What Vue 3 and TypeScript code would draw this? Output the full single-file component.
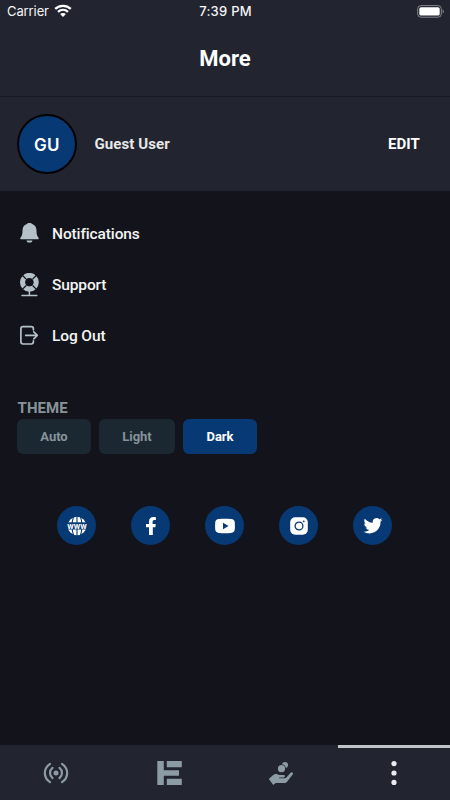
<script setup lang="ts">
import { ref } from 'vue'

type Theme = 'Auto' | 'Light' | 'Dark'

const menu = [
  { id: 'bell', label: 'Notifications' },
  { id: 'support', label: 'Support' },
  { id: 'logout', label: 'Log Out' },
]
const themes: Theme[] = ['Auto', 'Light', 'Dark']
const theme = ref<Theme>('Dark')
const socials = ['web', 'facebook', 'youtube', 'instagram', 'twitter']
const tabs = ['live', 'home', 'give', 'more']
const activeTab = ref('more')
</script>

<template>
  <div class="screen">
    <header class="top">
      <div class="status">
        <div class="carrier">
          <span>Carrier</span>
          <svg width="18" height="13" viewBox="0 0 18 13">
            <path d="M1.2 4.9C5.6.8 12.4.8 16.8 4.9" fill="none" stroke="#fff" stroke-width="2.3" />
            <path d="M4 7.9c2.9-2.6 7.1-2.6 10 0" fill="none" stroke="#fff" stroke-width="2.2" />
            <path d="M6.1 10.1c1.6-1.5 4.2-1.5 5.8 0L9 13z" fill="#fff" />
          </svg>
        </div>
        <span class="time">7:39 PM</span>
        <svg class="battery" width="28" height="13" viewBox="0 0 28 13">
          <rect x=".7" y=".6" width="23.6" height="11.6" rx="3.2" fill="none" stroke="#85868c" />
          <rect x="2.3" y="2.2" width="20.4" height="8.4" rx="1.7" fill="#fff" />
          <path d="M25.6 4.3c1.7.8 1.7 3.5 0 4.3z" fill="#85868c" />
        </svg>
      </div>
      <h1>More</h1>
    </header>

    <section class="profile">
      <div class="avatar">GU</div>
      <span class="name">Guest User</span>
      <button class="edit">EDIT</button>
    </section>

    <main>
      <nav class="menu">
        <a v-for="item in menu" :key="item.id" class="row">
          <svg width="24" height="24" viewBox="0 0 24 24" fill="#b5c1c8">
            <template v-if="item.id === 'bell'">
              <path d="M12.500 1c1.500 0 2.400.5 2.700 1.100 2.700.9 4.300 3.200 4.300 6.500 0 3.900.6 5.500 1.700 6.600.5.500.6.900.6 1.300 0 .5-.3.700-.8.700H4c-.5 0-.8-.2-.8-.7 0-.4.1-.8.600-1.300 1.100-1.100 1.700-2.700 1.700-6.600 0-3.300 1.600-5.600 4.300-6.500.3-.6 1.200-1.100 2.700-1.100z" />
              <path d="M9.500 18.400h6c-.3 1.500-1.400 2.200-3 2.200s-2.700-.7-3-2.200z" />
            </template>
            <template v-else-if="item.id === 'support'">
              <circle cx="12.400" cy="9.300" r="6.700" fill="none" stroke="#b5c1c8" stroke-width="5.400" />
              <path d="M5.100 2l4.100 4.100M15.600 12.500l4.100 4.100M19.700 2l-4.100 4.100M9.200 12.500l-4.100 4.100" stroke="#13141b" stroke-width="1.300" />
              <circle cx="12.400" cy="9.300" r="4" fill="#13141b" />
              <path d="M12.400 18v4M5 22.400h14.800" fill="none" stroke="#b5c1c8" stroke-width="1.500" stroke-linecap="round" />
            </template>
            <g v-else fill="none" stroke="#b5c1c8" stroke-width="1.700" stroke-linecap="round" stroke-linejoin="round">
              <path d="M16.400 5.800V4.900c0-1.400-.8-2.200-2.200-2.200H6.100c-1.400 0-2.200.8-2.200 2.200v12.900c0 1.400.8 2.200 2.200 2.200h8.100c1.400 0 2.200-.8 2.200-2.200v-.9" />
              <path d="M8.700 11.400h11.400M16.800 7.900l3.500 3.500-3.500 3.500" />
            </g>
          </svg>
          <span>{{ item.label }}</span>
        </a>
      </nav>

      <h2>THEME</h2>
      <div class="themes">
        <button v-for="t in themes" :key="t" :class="{ selected: theme === t }" @click="theme = t">{{ t }}</button>
      </div>

      <div class="socials">
        <a v-for="s in socials" :key="s" class="social">
          <svg width="22" height="22" viewBox="0 0 22 22" fill="#fff">
            <template v-if="s === 'web'">
              <circle cx="11" cy="11" r="9.300" />
              <path d="M11 1v20M7.600 1.600C5.500 7 5.500 15 7.600 20.400M14.400 1.600c2.100 5.400 2.100 13.400 0 18.800" fill="none" stroke="#073974" stroke-width="1.100" />
              <path d="M0 7.300h22v7.200H0z" fill="#073974" />
              <text x="1.300" y="13.600" textLength="19.400" lengthAdjust="spacingAndGlyphs">www</text>
            </template>
            <path v-else-if="s === 'facebook'" d="M9 20v-7.700H6V9h3V6.500C9 3.600 10.700 2 13.400 2c1.300 0 2.500.2 2.500.2v2.900h-1.500c-1.300 0-1.800.8-1.800 1.700V9h3.200l-.5 3.300h-2.500V20z" />
            <path v-else-if="s === 'youtube'" fill-rule="evenodd" d="M5 4.100c4-.4 8-.4 12 0 2.500.2 3.600 1.300 3.800 3.600.2 2.200.2 4.400 0 6.600-.2 2.300-1.300 3.400-3.800 3.600-4 .3-8 .3-12 0-2.500-.2-3.600-1.300-3.800-3.600-.2-2.200-.2-4.400 0-6.600.2-2.300 1.300-3.400 3.800-3.600zm4 3.700v6.400l5.500-3.200z" />
            <template v-else-if="s === 'instagram'">
              <rect x="2.200" y="2.200" width="17.600" height="17.600" rx="5" />
              <circle cx="11" cy="11" r="3.900" fill="none" stroke="#073974" stroke-width="1.300" />
              <circle cx="15.700" cy="6.300" r=".9" fill="#073974" />
            </template>
            <path v-else transform="translate(1.500 1.200) scale(.79)" d="M23.950 4.570a10 10 0 0 1-2.820.77 4.960 4.960 0 0 0 2.160-2.720c-.95.550-2 .960-3.130 1.180a4.920 4.920 0 0 0-8.380 4.480C7.690 8.090 4.070 6.130 1.640 3.160a4.820 4.820 0 0 0-.67 2.480c0 1.710.87 3.210 2.190 4.100a4.900 4.900 0 0 1-2.230-.620v.060a4.920 4.920 0 0 0 3.950 4.830 5 5 0 0 1-2.210.080 4.940 4.940 0 0 0 4.600 3.420A9.870 9.870 0 0 1 0 19.540a13.990 13.990 0 0 0 7.560 2.210c9.050 0 14-7.500 14-13.980 0-.21 0-.42-.02-.63a9.940 9.940 0 0 0 2.460-2.550z" />
          </svg>
        </a>
      </div>
    </main>

    <footer class="tabs">
      <a v-for="tab in tabs" :key="tab" class="tab" :class="{ active: activeTab === tab }" @click="activeTab = tab">
        <svg width="28" height="28" viewBox="0 0 28 28" fill="#8c9ba4">
          <template v-if="tab === 'live'">
            <circle cx="14" cy="14" r="2.500" />
            <path d="M10.500 8.900c-3.300 2.500-3.300 7.700 0 10.200M17.500 8.900c3.300 2.500 3.300 7.700 0 10.200M8 4.800c-6.900 4.600-6.900 13.800 0 18.400M20 4.800c6.900 4.600 6.900 13.800 0 18.400" fill="none" stroke="#8c9ba4" stroke-width="2.200" stroke-linecap="round" />
          </template>
          <path v-else-if="tab === 'home'" d="M2.300 2h6.500v9.300H24v5.400H8.800V26H2.300zM11.800 2h15v6.200h-15zM11.800 19.800h15V26h-15z" />
          <template v-else-if="tab === 'give'">
            <circle cx="18" cy="6" r="3" />
            <circle cx="14.500" cy="9.700" r="4.400" fill="#22242f" />
            <circle cx="14.500" cy="9.700" r="3.600" />
            <path d="M1.800 19.900l4.400-3.800c1.300-1.100 3-1.300 4.500-.7l1.500.6h4.200c2 0 2 2.400 0 2.400h-4.200v.9h5.200c1 0 1.700-.4 2.400-1.200l3.800-4.400c1.400-1.400 3.200.1 2.100 1.700l-5.500 7c-.8 1.100-1.600 1.500-2.900 1.500H8.700L6.300 26z" />
          </template>
          <g v-else fill="#e9ebee">
            <circle cx="14" cy="4.600" r="2.600" /><circle cx="14" cy="14" r="2.600" /><circle cx="14" cy="23.400" r="2.600" />
          </g>
        </svg>
      </a>
    </footer>
  </div>
</template>

<style>
body { margin: 0; background: #13141b; }
</style>

<style scoped>
* { box-sizing: border-box; }
.screen { width: 450px; height: 800px; display: flex; flex-direction: column; background: #13141b; color: #f3f4f4; font-family: Roboto, sans-serif; overflow: hidden; }
button { border: 0; padding: 0; background: none; font: inherit; color: inherit; }
.top { height: 97px; background: #22242f; border-bottom: 1px solid #171821; }
.status { height: 22px; display: grid; grid-template-columns: 1fr auto 1fr; align-items: center; padding: 0 5px 0 7px; font: 400 13px Inter, sans-serif; color: #f5f5f6; }
.carrier { display: flex; align-items: center; gap: 5px; letter-spacing: -.1px; }
.carrier svg { margin-top: -1px; }
.time { font-weight: 500; letter-spacing: .25px; margin-right: 1px; }
.battery { justify-self: end; }
h1 { margin: 0; text-align: center; font-size: 22px; line-height: 26px; padding-top: 24px; font-weight: 700; color: #fff; }
.profile { height: 94px; background: #22242f; display: flex; align-items: center; padding: 0 30px 0 17px; }
.avatar { width: 60px; height: 60px; border: 2px solid #020304; border-radius: 50%; background: #073974; display: grid; place-items: center; font: 600 17px Inter, sans-serif; letter-spacing: .4px; padding-top: 1px; color: #fff; }
.name { flex: 1; margin-left: 17.500px; font-size: 15px; letter-spacing: .08px; font-weight: 700; color: #e7e8e8; }
.edit { font-size: 15px; letter-spacing: .1px; font-weight: 700; color: #fff; }
main { flex: 1; padding: 17px 17px 0; }
.menu { display: flex; flex-direction: column; }
.row { height: 51px; display: flex; align-items: center; gap: 11px; font-size: 15.500px; letter-spacing: -.12px; font-weight: 500; }
h2 { margin: 37px 0 0 .5px; font-size: 15px; letter-spacing: .1px; line-height: 20px; font-weight: 700; color: #87939a; }
.themes { display: flex; gap: 8px; margin-top: 1px; }
.themes button { width: 74px; height: 35px; border-radius: 6px; background: #1b2731; color: #87939a; font-size: 13px; letter-spacing: -.05px; font-weight: 700; }
.themes button:nth-child(2) { width: 76px; }
.themes .selected { background: #073974; color: #fff; }
.socials { display: flex; justify-content: center; gap: 35px; margin-top: 52px; padding-right: 1px; }
.social { width: 39px; height: 39px; border-radius: 50%; background: #073974; display: grid; place-items: center; }
.social text { font: 700 8.500px Inter, sans-serif; }
.tabs { height: 55px; display: grid; grid-template-columns: repeat(4, 1fr); background: #22242f; }
.tab { display: grid; place-items: center; border-top: 3px solid transparent; padding-bottom: 2px; }
.active { border-top-color: #bfc5c9; }
</style>
